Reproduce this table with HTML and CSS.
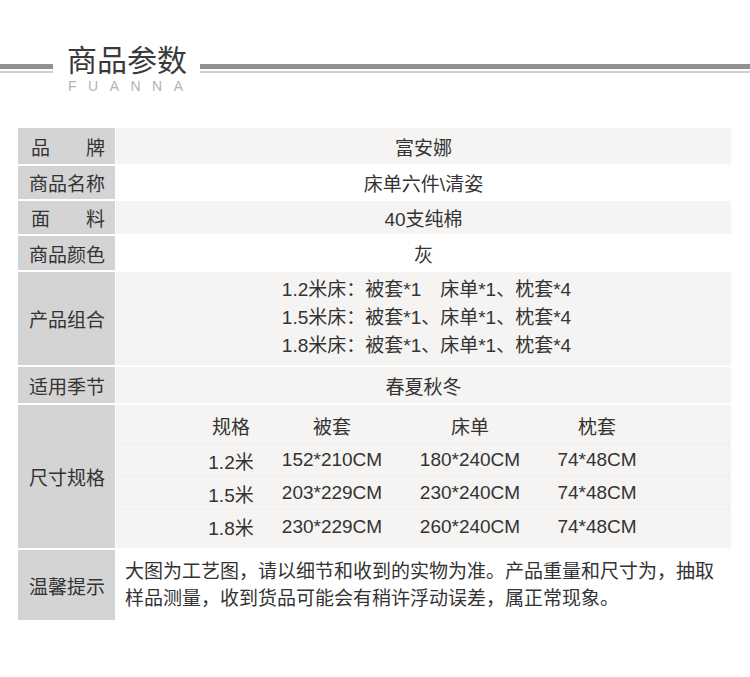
FILE: index.html
```html
<!DOCTYPE html>
<html lang="zh">
<head>
<meta charset="utf-8">
<link rel="stylesheet" href="styles.css">
</head>
<body>
<div class="page">
  <div class="head">
    <div class="rule rule-left"></div>
    <div class="title-block">
      <div class="title">商品参数</div>
      <div class="subtitle">FUANNA</div>
    </div>
    <div class="rule rule-right"></div>
  </div>

  <div class="table">
    <div class="row r1 alt">
      <div class="label spread"><span>品</span><span>牌</span></div>
      <div class="value">富安娜</div>
    </div>
    <div class="row r2">
      <div class="label">商品名称</div>
      <div class="value">床单六件\清姿</div>
    </div>
    <div class="row r3 alt">
      <div class="label spread"><span>面</span><span>料</span></div>
      <div class="value">40支纯棉</div>
    </div>
    <div class="row r4">
      <div class="label">商品颜色</div>
      <div class="value">灰</div>
    </div>
    <div class="row r5 alt">
      <div class="label">产品组合</div>
      <div class="value lines">
        <div>1.2米床：被套*1　床单*1、枕套*4</div>
        <div>1.5米床：被套*1、床单*1、枕套*4</div>
        <div>1.8米床：被套*1、床单*1、枕套*4</div>
      </div>
    </div>
    <div class="row r6 alt">
      <div class="label">适用季节</div>
      <div class="value">春夏秋冬</div>
    </div>
    <div class="row r7 alt">
      <div class="label">尺寸规格</div>
      <div class="value sizes">
        <div class="size-row size-head"><span>规格</span><span>被套</span><span>床单</span><span>枕套</span></div>
        <div class="size-row"><span>1.2米</span><span>152*210CM</span><span>180*240CM</span><span>74*48CM</span></div>
        <div class="size-row"><span>1.5米</span><span>203*229CM</span><span>230*240CM</span><span>74*48CM</span></div>
        <div class="size-row last"><span>1.8米</span><span>230*229CM</span><span>260*240CM</span><span>74*48CM</span></div>
      </div>
    </div>
    <div class="row r8">
      <div class="label">温馨提示</div>
      <div class="value note">大图为工艺图，请以细节和收到的实物为准。产品重量和尺寸为，抽取<br>样品测量，收到货品可能会有稍许浮动误差，属正常现象。</div>
    </div>
  </div>
</div>
</body>
</html>
```

FILE: styles.css
```css
html, body {
  margin: 0;
  padding: 0;
  background: #ffffff;
}

body {
  font-family: "Liberation Sans", "Noto Sans CJK SC", sans-serif;
  color: #333333;
}

.page {
  width: 750px;
  height: 677px;
  overflow: hidden;
}

.head {
  display: flex;
  align-items: flex-start;
  padding-top: 42px;
  height: 88px;
  box-sizing: border-box;
}

.rule {
  margin-top: 22px;
  height: 9px;
  border-top: 5px solid #929292;
  border-bottom: 2px solid #cfcfcf;
  box-sizing: border-box;
}

.rule-left {
  width: 53px;
}

.rule-right {
  flex: 1;
}

.title-block {
  margin: 0 13px 0 14px;
  width: 120px;
  display: flex;
  flex-direction: column;
  align-items: flex-start;
}

.title {
  font-family: "Noto Sans CJK SC", sans-serif;
  font-size: 30px;
  line-height: 32px;
  color: #3a3a3a;
  white-space: nowrap;
}

.subtitle {
  font-family: "Liberation Sans", sans-serif;
  font-size: 14px;
  line-height: 14px;
  letter-spacing: 11.5px;
  color: #b4b4b4;
  margin-top: 5px;
  margin-left: 1px;
  white-space: nowrap;
}

.table {
  margin-left: 18px;
  margin-top: 40px;
  width: 713px;
  display: flex;
  flex-direction: column;
  gap: 2px;
}

.row {
  display: grid;
  grid-template-columns: 97px 1fr;
  column-gap: 1px;
  font-size: 19px;
}

.r1 { height: 36px; }
.r2 { height: 33px; }
.r3 { height: 33px; }
.r4 { height: 34px; }
.r5 { height: 93px; }
.r6 { height: 36px; }
.r7 { height: 143px; }
.r8 { height: 70px; }

.label {
  background: #d4d4d4;
  display: flex;
  align-items: center;
  justify-content: center;
  font-family: "Noto Sans CJK SC", sans-serif;
  color: #333333;
  padding: 0 10px 0 11px;
}

.label.spread {
  justify-content: space-between;
  padding: 0 10px 0 13px;
}

.value {
  display: flex;
  align-items: center;
  justify-content: center;
  background: #ffffff;
  color: #333333;
}

.alt .value {
  background: #f5f4f2;
}

.lines {
  flex-direction: column;
  line-height: 28px;
  padding-bottom: 1px;
  padding-left: 6px;
}

.sizes {
  flex-direction: column;
  align-items: stretch;
  justify-content: flex-start;
  padding: 2px 0 0 0;
}

.size-row {
  display: grid;
  grid-template-columns: 90px 112px 164px 90px;
  height: 33px;
  align-items: center;
  border-bottom: 1px solid #efeeec;
  padding-left: 70px;
  box-sizing: border-box;
}

.size-row span {
  text-align: center;
  white-space: nowrap;
}

.size-head {
  height: 37px;
}

.size-row.last {
  border-bottom: none;
}

.note {
  justify-content: flex-start;
  padding-left: 9px;
  line-height: 27px;
  white-space: nowrap;
}
```
